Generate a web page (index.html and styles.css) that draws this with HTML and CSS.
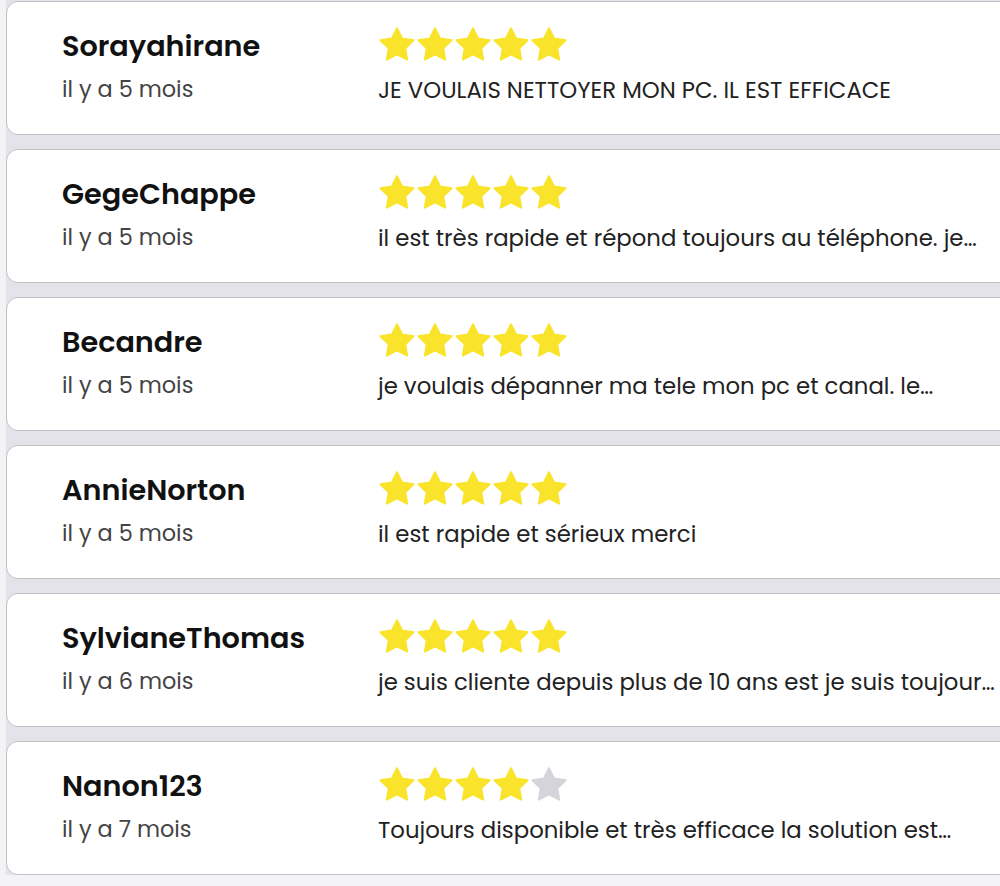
FILE: index.html
```html
<!DOCTYPE html>
<html lang="fr">
<head>
<meta charset="utf-8">
<title>Avis</title>
<link rel="stylesheet" href="styles.css">
</head>
<body>
<svg width="0" height="0" class="defs">
  <defs>
    <path id="star" d="M12 2 L15.23 8.55 L22.46 9.6 L17.23 14.7 L18.47 21.9 L12 18.5 L5.53 21.9 L6.77 14.7 L1.54 9.6 L8.77 8.55 Z"/>
  </defs>
</svg>
<main class="list">
  <article class="card">
    <div class="who">
      <div class="name">Sorayahirane</div>
      <div class="date">il y a 5 mois</div>
    </div>
    <div class="review">
      <div class="stars">
        <svg class="star on" viewBox="0 0 24 24"><use href="#star"/></svg>
        <svg class="star on" viewBox="0 0 24 24"><use href="#star"/></svg>
        <svg class="star on" viewBox="0 0 24 24"><use href="#star"/></svg>
        <svg class="star on" viewBox="0 0 24 24"><use href="#star"/></svg>
        <svg class="star on" viewBox="0 0 24 24"><use href="#star"/></svg>
      </div>
      <p class="text">JE VOULAIS NETTOYER MON PC. IL EST EFFICACE</p>
    </div>
  </article>
  <article class="card">
    <div class="who">
      <div class="name">GegeChappe</div>
      <div class="date">il y a 5 mois</div>
    </div>
    <div class="review">
      <div class="stars">
        <svg class="star on" viewBox="0 0 24 24"><use href="#star"/></svg>
        <svg class="star on" viewBox="0 0 24 24"><use href="#star"/></svg>
        <svg class="star on" viewBox="0 0 24 24"><use href="#star"/></svg>
        <svg class="star on" viewBox="0 0 24 24"><use href="#star"/></svg>
        <svg class="star on" viewBox="0 0 24 24"><use href="#star"/></svg>
      </div>
      <p class="text">il est très rapide et répond toujours au téléphone. je…</p>
    </div>
  </article>
  <article class="card">
    <div class="who">
      <div class="name">Becandre</div>
      <div class="date">il y a 5 mois</div>
    </div>
    <div class="review">
      <div class="stars">
        <svg class="star on" viewBox="0 0 24 24"><use href="#star"/></svg>
        <svg class="star on" viewBox="0 0 24 24"><use href="#star"/></svg>
        <svg class="star on" viewBox="0 0 24 24"><use href="#star"/></svg>
        <svg class="star on" viewBox="0 0 24 24"><use href="#star"/></svg>
        <svg class="star on" viewBox="0 0 24 24"><use href="#star"/></svg>
      </div>
      <p class="text">je voulais dépanner ma tele mon pc et canal. le…</p>
    </div>
  </article>
  <article class="card">
    <div class="who">
      <div class="name">AnnieNorton</div>
      <div class="date">il y a 5 mois</div>
    </div>
    <div class="review">
      <div class="stars">
        <svg class="star on" viewBox="0 0 24 24"><use href="#star"/></svg>
        <svg class="star on" viewBox="0 0 24 24"><use href="#star"/></svg>
        <svg class="star on" viewBox="0 0 24 24"><use href="#star"/></svg>
        <svg class="star on" viewBox="0 0 24 24"><use href="#star"/></svg>
        <svg class="star on" viewBox="0 0 24 24"><use href="#star"/></svg>
      </div>
      <p class="text">il est rapide et sérieux merci</p>
    </div>
  </article>
  <article class="card">
    <div class="who">
      <div class="name">SylvianeThomas</div>
      <div class="date">il y a 6 mois</div>
    </div>
    <div class="review">
      <div class="stars">
        <svg class="star on" viewBox="0 0 24 24"><use href="#star"/></svg>
        <svg class="star on" viewBox="0 0 24 24"><use href="#star"/></svg>
        <svg class="star on" viewBox="0 0 24 24"><use href="#star"/></svg>
        <svg class="star on" viewBox="0 0 24 24"><use href="#star"/></svg>
        <svg class="star on" viewBox="0 0 24 24"><use href="#star"/></svg>
      </div>
      <p class="text">je suis cliente depuis plus de 10 ans est je suis toujour…</p>
    </div>
  </article>
  <article class="card">
    <div class="who">
      <div class="name">Nanon123</div>
      <div class="date">il y a 7 mois</div>
    </div>
    <div class="review">
      <div class="stars">
        <svg class="star on" viewBox="0 0 24 24"><use href="#star"/></svg>
        <svg class="star on" viewBox="0 0 24 24"><use href="#star"/></svg>
        <svg class="star on" viewBox="0 0 24 24"><use href="#star"/></svg>
        <svg class="star on" viewBox="0 0 24 24"><use href="#star"/></svg>
        <svg class="star off" viewBox="0 0 24 24"><use href="#star"/></svg>
      </div>
      <p class="text">Toujours disponible et très efficace la solution est…</p>
    </div>
  </article>
</main>
</body>
</html>
```

FILE: styles.css
```css
html, body {
  margin: 0;
  padding: 0;
}
body {
  background: #f4f4f6;
  width: 1000px;
  height: 886px;
  overflow: hidden;
  font-family: "Poppins", "Inter", "Noto Sans", sans-serif;
}
.defs {
  position: absolute;
  width: 0;
  height: 0;
}
.list {
  display: flex;
  flex-direction: column;
  gap: 14px;
  padding: 1px 0 0 0;
  border-left: 6px solid #f3f3f5;
  background: #e3e3e9;
  overflow: hidden;
}
.card {
  flex: none;
  width: 1040px;
  height: 132px;
  box-sizing: content-box;
  background: #fff;
  border: 1px solid #c2c2c6;
  border-radius: 12px;
  display: grid;
  grid-template-columns: 316px 1fr;
  align-items: start;
  padding-left: 55px;
}
.who {
  padding-top: 26px;
}
.name {
  font-size: 28.7px;
  font-weight: 600;
  color: #111;
  line-height: 36px;
  white-space: nowrap;
}
.date {
  margin-top: 10px;
  font-size: 22.4px;
  color: #444;
  line-height: 30px;
  white-space: nowrap;
}
.review {
  padding-top: 23px;
}
.stars {
  display: flex;
  height: 38px;
}
.star {
  width: 38px;
  height: 38px;
  display: block;
  stroke-width: 1.2;
  stroke-linejoin: round;
}
.star.on { fill: #f9e42b; stroke: #f9e42b; }
.star.off { fill: #d4d4da; stroke: #d4d4da; }
.text {
  margin: 12px 0 0;
  font-size: 22.8px;
  line-height: 30px;
  color: #222;
  white-space: nowrap;
}
```
